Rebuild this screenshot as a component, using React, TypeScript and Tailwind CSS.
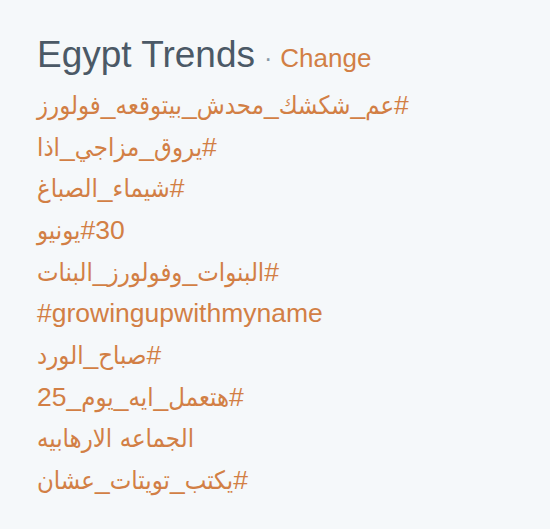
const trends = [
  "#عم_شكشك_محدش_بيتوقعه_فولورز",
  "#يروق_مزاجي_اذا",
  "#شيماء_الصباغ",
  "#30يونيو",
  "#البنوات_وفولورز_البنات",
  "#growingupwithmyname",
  "#صباح_الورد",
  "#هتعمل_ايه_يوم_25",
  "الجماعه الارهابيه",
  "#يكتب_تويتات_عشان",
];

// Arabic runs get a narrower face, latin/digits/# stay in Liberation Sans
function TrendText({ text }: { text: string }) {
  const parts = text.split(/([\u0600-\u06FF]+)/);
  return (
    <>
      {parts.map((p, i) =>
        /[\u0600-\u06FF]/.test(p) ? (
          <span key={i} className="font-['DejaVu_Sans_Condensed','DejaVu_Sans',sans-serif] text-[25.5px] font-stretch-condensed">
            {p}
          </span>
        ) : (
          <span key={i}>{p}</span>
        )
      )}
    </>
  );
}

export default function App() {
  return (
    <div className="min-h-screen w-full bg-[#f5f8fa] pl-[37px] pt-[33px] font-['Liberation_Sans',sans-serif]">
      {/* Header */}
      <div className="flex h-[44px] items-baseline">
        <h2 className="text-[37px] leading-[44px] text-[#4b5966]">Egypt Trends</h2>
        <span className="ml-[9px] text-[25px] text-[#8899a6]">·</span>
        <a href="#" className="ml-[8px] text-[26px] text-[#d27f45]">
          Change
        </a>
      </div>
      {/* Trend list */}
      <ul className="mt-[7px] flex flex-col items-start">
        {trends.map((t) => (
          <li key={t} className="flex h-[41.7px] items-center">
            <a href="#" dir="auto" className="inline-block text-[26.5px] leading-[30px] text-[#d27f45]">
              <TrendText text={t} />
            </a>
          </li>
        ))}
      </ul>
    </div>
  );
}
